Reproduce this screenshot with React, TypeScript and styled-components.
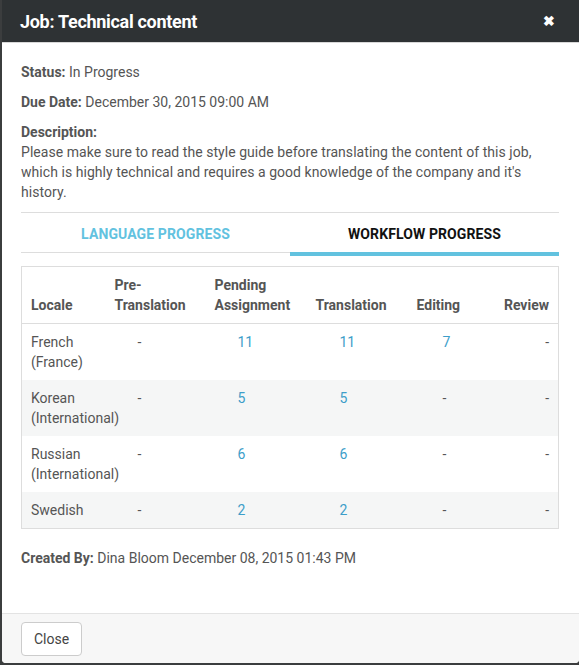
import React from 'react';
import styled, { createGlobalStyle } from 'styled-components';

const GlobalStyle = createGlobalStyle`
  html, body {
    margin: 0;
    padding: 0;
    background: #3b3d3e;
  }
  body {
    font-family: Roboto, "Liberation Sans", sans-serif;
    color: #555;
  }
`;

const Modal = styled.div`
  margin-left: 2px;
  width: 577px;
  height: 663px;
  background: #fff;
  border-radius: 0 0 4px 4px;
  overflow: hidden;
  display: flex;
  flex-direction: column;
`;

const Header = styled.div`
  height: 42px;
  margin-left: -2px;
  padding: 0 20px;
  background: #2e3234;
  border-bottom: 1px solid #d8d8d8;
  display: flex;
  align-items: center;
  justify-content: space-between;
`;

const Title = styled.h1`
  margin: 0;
  font-size: 18px;
  font-weight: 700;
  color: #fff;
  letter-spacing: -0.3px;
`;

const CloseX = styled.span`
  color: #fff;
  font-size: 14px;
  font-weight: 700;
  margin-right: 4px;
`;

const Body = styled.div`
  flex: 1;
  padding: 19px 20px 0 19px;
  font-size: 14px;
  line-height: 20px;
`;

const Field = styled.div`
  margin-bottom: 10px;
`;

const Label = styled.b`
  font-weight: 700;
  color: #555;
`;

const Para = styled.p`
  margin: 0;
  letter-spacing: 0.05px;
`;

const Tabs = styled.div`
  margin-top: 10px;
  border-top: 1px solid #ddd;
  display: flex;
`;

const Tab = styled.div<{ $active?: boolean }>`
  flex: 1;
  height: 36px;
  padding-top: 3px;
  text-align: center;
  line-height: 36px;
  font-size: 14px;
  font-weight: 700;
  letter-spacing: 0.1px;
  color: ${(p) => (p.$active ? '#111' : '#62c2df')};
  border-bottom: ${(p) => (p.$active ? '4px solid #62c2df' : '1px solid #ddd')};
  margin-bottom: ${(p) => (p.$active ? '0' : '3px')};
`;

const Table = styled.table`
  margin-top: 10px;
  width: 538px;
  border-collapse: collapse;
  border: 1px solid #ddd;
  table-layout: fixed;
`;

const Th = styled.th<{ $w?: number; $right?: boolean }>`
  box-sizing: border-box;
  width: ${(p) => (p.$w ? `${p.$w}px` : 'auto')};
  padding: 8px 9px;
  text-align: ${(p) => (p.$right ? 'right' : 'left')};
  vertical-align: bottom;
  font-weight: 700;
  color: #555;
  border-bottom: 1px solid #ddd;
`;

const Row = styled.tr<{ $striped?: boolean }>`
  background: ${(p) => (p.$striped ? '#f5f6f6' : '#fff')};
`;

const Td = styled.td<{ $indent?: number; $right?: boolean }>`
  box-sizing: border-box;
  padding: 8px 9px 8px ${(p) => (p.$indent ?? 9)}px;
  vertical-align: top;
  text-align: ${(p) => (p.$right ? 'right' : 'left')};
`;

const Num = styled.span`
  color: #3d9ec9;
`;

const Created = styled.div`
  margin-top: 19px;
`;

const Footer = styled.div`
  height: 50px;
  background: #f7f7f7;
  border-top: 1px solid #e3e3e3;
  padding: 8px 19px 0;
  box-sizing: border-box;
`;

const Button = styled.button`
  height: 34px;
  padding: 0 12px;
  background: #fff;
  border: 1px solid #ccc;
  border-radius: 4px;
  font-family: inherit;
  font-size: 14px;
  color: #444;
`;

type Row = { locale: string; cells: (number | null)[] };

const rows: Row[] = [
  { locale: 'French (France)', cells: [null, 11, 11, 7, null] },
  { locale: 'Korean (International)', cells: [null, 5, 5, null, null] },
  { locale: 'Russian (International)', cells: [null, 6, 6, null, null] },
  { locale: 'Swedish', cells: [null, 2, 2, null, null] },
];

const indents = [32, 32, 33, 35];

const Value = ({ v }: { v: number | null }) => (v === null ? <>-</> : <Num>{v}</Num>);

const App = () => (
  <>
    <GlobalStyle />
    <Modal>
      <Header>
        <Title>Job: Technical content</Title>
        <CloseX>✖</CloseX>
      </Header>
      <Body>
        <Field>
          <Label>Status:</Label> In Progress
        </Field>
        <Field>
          <Label>Due Date:</Label> December 30, 2015 09:00 AM
        </Field>
        <div>
          <Label>Description:</Label>
          <Para>
            Please make sure to read the style guide before translating the content of this job,
            which is highly technical and requires a good knowledge of the company and it's
            history.
          </Para>
        </div>
        <Tabs>
          <Tab>LANGUAGE PROGRESS</Tab>
          <Tab $active>WORKFLOW PROGRESS</Tab>
        </Tabs>
        <Table>
          <thead>
            <tr>
              <Th $w={84}>Locale</Th>
              <Th $w={100}>Pre-<br />Translation</Th>
              <Th $w={101}>Pending Assignment</Th>
              <Th $w={101}>Translation</Th>
              <Th>Editing</Th>
              <Th $w={65} $right>Review</Th>
            </tr>
          </thead>
          <tbody>
            {rows.map((r, i) => (
              <Row key={r.locale} $striped={i % 2 === 1}>
                <Td>{r.locale}</Td>
                {r.cells.slice(0, 4).map((c, j) => (
                  <Td key={j} $indent={indents[j]}>
                    <Value v={c} />
                  </Td>
                ))}
                <Td $right>
                  <Value v={r.cells[4]} />
                </Td>
              </Row>
            ))}
          </tbody>
        </Table>
        <Created>
          <Label>Created By:</Label> Dina Bloom December 08, 2015 01:43 PM
        </Created>
      </Body>
      <Footer>
        <Button>Close</Button>
      </Footer>
    </Modal>
  </>
);

export default App;
